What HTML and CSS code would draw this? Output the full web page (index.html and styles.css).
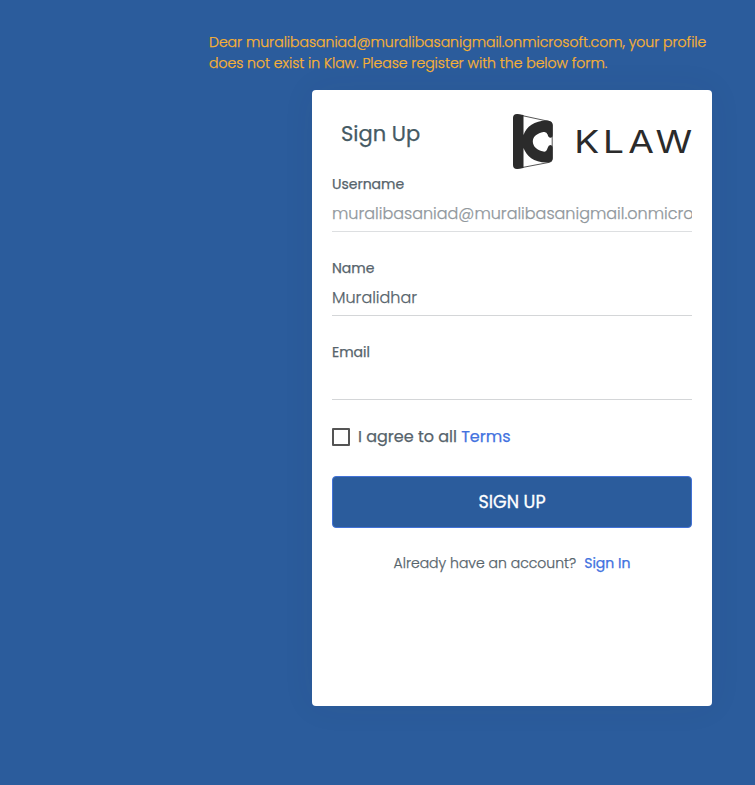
FILE: index.html
```html
<!DOCTYPE html>
<html lang="en">
<head>
<meta charset="utf-8">
<title>Klaw - Sign Up</title>
<link rel="stylesheet" href="styles.css">
</head>
<body>
<main class="page">
  <p class="notice">Dear muralibasaniad@muralibasanigmail.onmicrosoft.com, your profile<br>does not exist in Klaw. Please register with the below form.</p>
  <section class="card">
    <header class="card-head">
      <h1 class="title">Sign Up</h1>
      <svg class="logo" width="180" height="56" viewBox="0 0 180 56" role="img" aria-label="Klaw">
        <g transform="translate(1 0)">
        <path d="M4 .5 L36 7.4 Q39.2 8.2 39.2 11 L39.2 45 Q39.2 48 36 48.4 L4 54.5" fill="none" stroke="#2b2b2b" stroke-width=".8"/>
        <path d="M0 4 Q0 0 4 0 L10.5 1 V21 C13.5 13 21 6.7 34 6.6 Q39.7 7 39.7 11 V21 Q39.7 23.8 37.4 23.8 Q35.5 23.8 34.6 20.5 Q33.6 17.4 30.5 18 C24.5 19 19.8 22.5 19.8 27.6 C19.8 32.7 24.5 36.6 30.5 37.6 Q33.6 38 34.6 34 Q35.5 31 37.4 31 Q39.7 31 39.7 33.5 V44 Q39.7 48 35 48.5 C21 49 13.5 42 10.5 34 V54 L4 55 Q0 55 0 51 Z" fill="#2b2b2b"/>
        </g>
        <g class="wordmark" transform="translate(0 39) scale(1.2 1)">
          <text x="51.8">K</text><text x="75.9">L</text><text x="96.8">A</text><text x="119.6">W</text>
        </g>
      </svg>
    </header>
    <form class="form">
      <label class="field"><span class="label">Username</span><span class="value value-user">muralibasaniad@muralibasanigmail.onmicrosoft.com</span></label>
      <label class="field"><span class="label">Name</span><span class="value">Muralidhar</span></label>
      <label class="field"><span class="label">Email</span><span class="value"></span></label>
      <div class="terms"><span class="box"></span><span class="agree">I agree to all <a class="link">Terms</a></span></div>
      <button class="submit" type="button">SIGN UP</button>
      <p class="signin"><span>Already have an account?</span><a class="link signin-link">Sign In</a></p>
    </form>
  </section>
</main>
</body>
</html>
```

FILE: styles.css
```css
* { box-sizing: border-box; }
body { margin: 0; background: #2b5c9c; font-family: Poppins, Inter, sans-serif; font-weight: 300; color: #56636b; -webkit-text-stroke: .25px currentColor; }
.page { height: 785px; padding: 32px 43px 0 209px; overflow: hidden; }
.notice { margin: 0; height: 58px; font-size: 14px; line-height: 21px; color: #f9b233; white-space: nowrap; }
.card { width: 400px; height: 616px; margin-left: 103px; padding: 24px 20px 0; background: #fff; border-radius: 4px; box-shadow: 0 0 35px rgba(49, 57, 66, .06); }
.card-head { display: flex; justify-content: space-between; height: 60px; padding-left: 9px; }
.title { margin: 4px 0 0; font-size: 21px; line-height: 32px; font-weight: 400; color: #455a64; }
.logo { display: block; overflow: visible; }
.wordmark { font-family: Inter, sans-serif; font-size: 31px; font-weight: 400; fill: #2b2b2b; -webkit-text-stroke: 0; }
.field { display: flex; flex-direction: column; height: 84px; }
.label { height: 20px; font-size: 14px; line-height: 20px; font-weight: 400; }
.value { height: 38px; border-bottom: 1px solid #d4d6d8; font-size: 16px; line-height: 39px; white-space: nowrap; overflow: hidden; }
.value-user { color: #90979c; border-bottom-color: #dddfe1; }
.terms { display: flex; align-items: center; gap: 8px; height: 20px; margin-top: 1px; font-size: 16px; }
.box { width: 18px; height: 18px; border: 2px solid #545454; border-radius: 1px; }
.agree { line-height: 20px; font-weight: 400; }
.link { color: #4272e0; font-weight: 400; }
.submit { display: block; width: 100%; height: 52px; margin: 29px 0 0; padding: 0; border: 1px solid #4272d7; border-radius: 4px; background: #2b5c9c; color: #fff; font: 400 17.5px/50px Poppins, Inter, sans-serif; -webkit-text-stroke: .3px #fff; }
.signin { display: flex; justify-content: center; gap: 8px; margin: 25px 0 0; font-size: 14px; line-height: 20px; }
```
